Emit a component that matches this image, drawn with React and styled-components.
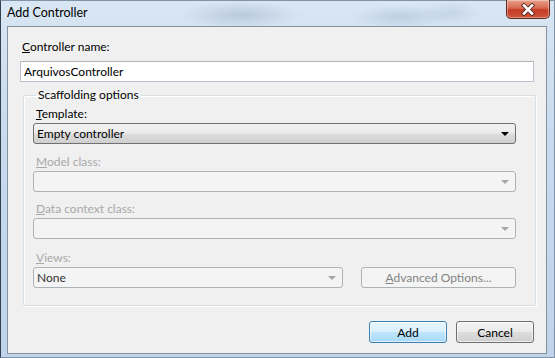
import React from 'react';
import styled, { createGlobalStyle, css } from 'styled-components';

const GlobalStyle = createGlobalStyle`
  html, body {
    margin: 0;
    padding: 0;
    background: #c9dbee;
  }
  body {
    font-family: Lato, "Noto Sans", sans-serif;
    font-size: 12px;
  }
`;

const Window = styled.div`
  width: 555px;
  height: 358px;
  box-sizing: border-box;
  display: flex;
  flex-direction: column;
  border: 1px solid #7f93a9;
  border-left-color: #33404e;
  background:
    radial-gradient(ellipse 60px 14px at 240px 14px, rgba(150, 170, 195, 0.45), transparent),
    radial-gradient(ellipse 50px 12px at 400px 16px, rgba(150, 175, 205, 0.4), transparent),
    radial-gradient(ellipse 30px 12px at 450px 12px, rgba(170, 190, 215, 0.4), transparent),
    linear-gradient(180deg, #d9e6f3 0%, #c7daee 40%, #bfd4ea 100%);
`;

const TitleBar = styled.div`
  height: 25px;
  display: flex;
  align-items: flex-start;
  padding-left: 6px;
`;

const Title = styled.span`
  line-height: 24px;
  color: #000;
  font-size: 12.5px;
`;

const CloseButton = styled.button`
  margin-left: auto;
  margin-right: 4px;
  margin-top: -1px;
  width: 44px;
  height: 19px;
  padding: 0;
  display: flex;
  align-items: center;
  justify-content: center;
  border: 1px solid #5f2a22;
  border-top: none;
  border-radius: 0 0 5px 5px;
  background: linear-gradient(180deg, #e8a08c 0%, #d76a52 45%, #c63c26 55%, #d0553a 100%);
  box-shadow: inset 0 0 0 1px rgba(255, 255, 255, 0.35);
`;

const Client = styled.div`
  flex: 1;
  margin: 0 7px 3px 6px;
  border: 1px solid #8593a1;
  background: #f0f0f0;
  padding: 12px 12px 10px 12px;
  display: flex;
  flex-direction: column;
`;

const Label = styled.div`
  height: 16px;
  line-height: 16px;
  margin-left: ${(p) => p.$indent || 2}px;
  color: ${(p) => (p.$disabled ? '#a8a8a8' : '#000')};
`;

const TextBox = styled.div`
  margin-top: 6px;
  height: 21px;
  box-sizing: border-box;
  border: 1px solid #b9c2cc;
  border-top-color: #abb3bc;
  background: #fff;
  padding-left: 3px;
  line-height: 19px;
  color: #000;
`;

const Group = styled.fieldset`
  margin: 5px -2px 0 3px;
  padding: 0 19px 17px 9px;
  border: 1px solid #d5dfe5;
  box-shadow: inset 1px 1px 0 #fff, 1px 1px 0 #fff;
  border-radius: 2px;
  display: flex;
  flex-direction: column;
  gap: 9px;
`;

const Legend = styled.legend`
  margin-left: 3px;
  padding: 0 2px;
  line-height: 16px;
  color: #000;
`;

const Field = styled.div`
  display: flex;
  flex-direction: column;
  gap: 1px;
  margin-top: ${(p) => p.$offset || 0}px;
`;

const enabledFace = css`
  border: 1px solid #707070;
  background: linear-gradient(180deg, #f2f2f2 0%, #ebebeb 48%, #dddddd 52%, #cfcfcf 100%);
  color: #000;
`;

const disabledFace = css`
  border: 1px solid #adb2b5;
  background: #f4f4f4;
`;

const Select = styled.div`
  height: 21px;
  box-sizing: border-box;
  border-radius: 3px;
  display: flex;
  align-items: center;
  padding: 0 6px 0 3px;
  ${(p) => (p.$disabled ? disabledFace : enabledFace)}
  color: ${(p) => (p.$disabled ? '#333' : '#000')};
  width: ${(p) => (p.$width ? `${p.$width}px` : 'auto')};
`;

const SelectText = styled.span`
  flex: 1;
  line-height: 19px;
`;

const Arrow = styled.span`
  width: 0;
  height: 0;
  border-left: 4px solid transparent;
  border-right: 4px solid transparent;
  border-top: 4px solid ${(p) => (p.$disabled ? '#a6a6a6' : '#000')};
`;

const Row = styled.div`
  display: flex;
  align-items: center;
  gap: 18px;
`;

const Button = styled.button`
  height: ${(p) => p.$height || 22}px;
  width: ${(p) => (p.$width ? `${p.$width}px` : 'auto')};
  flex: ${(p) => (p.$grow ? 1 : 'none')};
  box-sizing: border-box;
  border-radius: 3px;
  padding: 0;
  font-family: inherit;
  font-size: 12px;
  ${(p) =>
    p.$variant === 'default'
      ? css`
          border: 1px solid #3c7fb1;
          background: linear-gradient(180deg, #eaf6fd 0%, #d9f0fc 48%, #bee6fd 52%, #a7d9f5 100%);
          color: #000;
          box-shadow: inset 0 0 0 1px rgba(255, 255, 255, 0.6);
        `
      : p.$variant === 'disabled'
      ? css`
          ${disabledFace}
          color: #838383;
        `
      : css`
          ${enabledFace}
          box-shadow: inset 0 0 0 1px rgba(255, 255, 255, 0.6);
        `}
`;

const Footer = styled.div`
  margin-top: auto;
  display: flex;
  justify-content: flex-end;
  gap: 9px;
`;

const XIcon = () => (
  <svg width="16" height="13" viewBox="0 0 16 13">
    <path d="M4 2.5 L12 10.5 M12 2.5 L4 10.5" stroke="#5a2a22" strokeWidth="4.4" strokeLinecap="square" />
    <path d="M4 2.5 L12 10.5 M12 2.5 L4 10.5" stroke="#fff" strokeWidth="2.6" strokeLinecap="square" />
  </svg>
);

const ComboField = ({ accessKey, rest, disabled, value, offset }) => (
  <Field $offset={offset}>
    <Label $disabled={disabled} $indent={3}>
      <u>{accessKey}</u>
      {rest}
    </Label>
    <Select $disabled={disabled}>
      <SelectText>{value}</SelectText>
      <Arrow $disabled={disabled} />
    </Select>
  </Field>
);

const App = () => {
  return (
    <>
      <GlobalStyle />
      <Window>
        <TitleBar>
          <Title>Add Controller</Title>
          <CloseButton aria-label="Close">
            <XIcon />
          </CloseButton>
        </TitleBar>
        <Client>
          <Label>
            <u>C</u>ontroller name:
          </Label>
          <TextBox>ArquivosController</TextBox>
          <Group>
            <Legend>Scaffolding options</Legend>
            <ComboField accessKey="T" rest="emplate:" value="Empty controller" offset={3} />
            <ComboField accessKey="M" rest="odel class:" disabled offset={1} />
            <ComboField accessKey="D" rest="ata context class:" disabled />
            <Field $offset={2}>
              <Label $disabled $indent={3}>
                <u>V</u>iews:
              </Label>
              <Row>
                <Select $disabled $width={310}>
                  <SelectText>None</SelectText>
                  <Arrow $disabled />
                </Select>
                <Button $variant="disabled" $height={21} $grow>
                  <u>A</u>dvanced Options...
                </Button>
              </Row>
            </Field>
          </Group>
          <Footer>
            <Button $variant="default" $width={78}>
              Add
            </Button>
            <Button $width={78}>Cancel</Button>
          </Footer>
        </Client>
      </Window>
    </>
  );
};

export default App;
